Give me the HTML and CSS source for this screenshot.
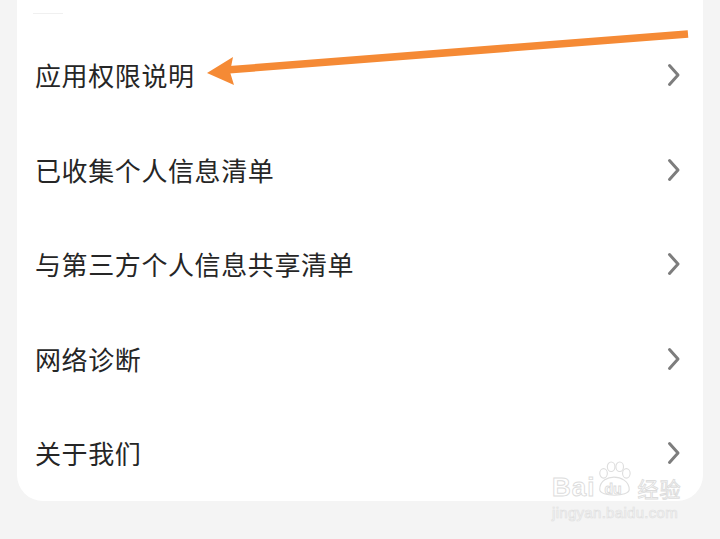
FILE: index.html
```html
<!DOCTYPE html>
<html lang="zh">
<head>
<meta charset="utf-8">
<link rel="stylesheet" href="styles.css">
</head>
<body>
<div class="page">
  <div class="card">
    <div class="stub"></div>
    <div class="row"><span class="label">应用权限说明</span><svg class="chev" viewBox="0 0 14 24"><path d="M2.5 2.5 L11 12 L2.5 21.5"/></svg></div>
    <div class="row"><span class="label">已收集个人信息清单</span><svg class="chev" viewBox="0 0 14 24"><path d="M2.5 2.5 L11 12 L2.5 21.5"/></svg></div>
    <div class="row"><span class="label">与第三方个人信息共享清单</span><svg class="chev" viewBox="0 0 14 24"><path d="M2.5 2.5 L11 12 L2.5 21.5"/></svg></div>
    <div class="row"><span class="label">网络诊断</span><svg class="chev" viewBox="0 0 14 24"><path d="M2.5 2.5 L11 12 L2.5 21.5"/></svg></div>
    <div class="row"><span class="label">关于我们</span><svg class="chev" viewBox="0 0 14 24"><path d="M2.5 2.5 L11 12 L2.5 21.5"/></svg></div>
  </div>
</div>
<svg class="arrow" viewBox="0 0 720 539" width="720" height="539">
  <line x1="688" y1="34" x2="226" y2="70" stroke="#f58a35" stroke-width="7.5"/>
  <polygon points="207,73 233,57 230,72 234,85" fill="#f58a35"/>
</svg>
<div class="watermark">
  <div class="wm-top">
    <span class="wm-bai">Bai</span>
    <span class="wm-paw">
      <svg viewBox="0 0 40 40" width="38" height="38">
        <g fill="none" stroke="#dedede" stroke-width="1.2">
          <ellipse cx="9" cy="13" rx="4" ry="5"/>
          <ellipse cx="17" cy="6" rx="4" ry="5"/>
          <ellipse cx="26" cy="6" rx="4" ry="5"/>
          <ellipse cx="33" cy="13" rx="4" ry="5"/>
          <path d="M5 30 C5 20 14 17 20 17 C27 17 36 21 36 30 C36 38 5 38 5 30 Z"/>
        </g>
      </svg>
      <span class="wm-du">du</span>
    </span>
    <span class="wm-jy">经验</span>
  </div>
  <div class="wm-url">jingyan.baidu.com</div>
</div>
</body>
</html>
```
FILE: styles.css
```css
html, body {
  margin: 0;
  padding: 0;
}
body {
  width: 720px;
  height: 539px;
  overflow: hidden;
  background: #f4f4f4;
  font-family: "Noto Sans CJK SC", "Noto Sans", sans-serif;
  position: relative;
}
.page {
  padding-left: 17px;
  padding-right: 17px;
}
.card {
  background: #ffffff;
  border-radius: 0 0 26px 26px;
  padding-top: 28px;
  position: relative;
}
.stub {
  position: absolute;
  left: 16px;
  top: 13px;
  width: 30px;
  height: 1px;
  background: #f0f0f0;
}
.row {
  height: 94.5px;
  display: flex;
  align-items: center;
  justify-content: space-between;
  padding-left: 18px;
  padding-right: 22px;
}
.label {
  font-size: 26px;
  letter-spacing: 0.6px;
  color: #262626;
  line-height: 1;
}
.chev {
  width: 14px;
  height: 24px;
}
.chev path {
  fill: none;
  stroke: #7d7d7d;
  stroke-width: 3;
  stroke-linecap: round;
  stroke-linejoin: round;
}
.arrow {
  position: absolute;
  left: 0;
  top: 0;
}
.watermark {
  position: absolute;
  left: 552px;
  top: 460px;
  display: flex;
  flex-direction: column;
  align-items: flex-start;
  font-family: "Liberation Sans", sans-serif;
}
.wm-top {
  display: flex;
  align-items: flex-end;
  height: 40px;
}
.wm-bai, .wm-du, .wm-jy {
  color: rgba(255,255,255,0.7);
  -webkit-text-stroke: 0.9px #dcdcdc;
  font-weight: bold;
}
.wm-bai {
  font-size: 26px;
  line-height: 26px;
  letter-spacing: 1px;
}
.wm-paw {
  position: relative;
  width: 40px;
  height: 40px;
  display: block;
}
.wm-paw svg {
  position: absolute;
  left: 0;
  top: 1px;
}
.wm-du {
  position: absolute;
  left: 9px;
  bottom: 4px;
  font-size: 14px;
  line-height: 14px;
}
.wm-jy {
  font-family: "Noto Sans CJK SC", sans-serif;
  font-size: 21px;
  line-height: 24px;
  margin-left: 2px;
  font-weight: normal;
  letter-spacing: 1px;
}
.wm-url {
  font-size: 15px;
  color: rgba(255,255,255,0.7);
  -webkit-text-stroke: 0.7px #e0e0e0;
  margin-top: 4px;
  letter-spacing: 0.3px;
}
```
